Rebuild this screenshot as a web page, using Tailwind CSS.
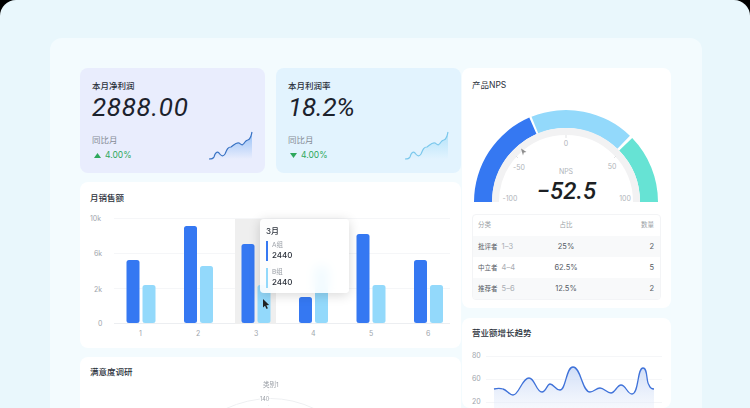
<!DOCTYPE html>
<html lang="en">
<head>
    <meta charset="UTF-8">
    <title>Dashboard</title>
    <script src="https://cdn.jsdelivr.net/npm/@tailwindcss/browser@4"></script>
</head>
<body class="bg-black">
<div class="w-[750px] h-[408px] overflow-hidden rounded-t-[16px] bg-[#e9f7fc] font-['Inter','Noto_Sans_CJK_SC',sans-serif] text-[#2a303a]">
    <div class="ml-[50px] mt-[38px] w-[652px] h-[400px] rounded-[12px] bg-[#f3fbfe] pl-[30px] pt-[30px] flex items-start">
        <!-- left column -->
        <div class="w-[381px] flex flex-col">
            <div class="flex gap-[11px]">
                <div class="relative w-[185px] h-[105px] rounded-[8px] bg-[#e9edfd] pl-[12px] pt-[12px]">
                    <div class="text-[8.500px] leading-[13px] font-medium">本月净利润</div>
                    <div class="mt-[-1px] text-[26px] leading-[30px] italic tracking-[0.7px] font-['Roboto'] text-[#1c222c]">2888.00</div>
                    <div class="text-[8.500px] leading-[12px] text-[#868c96] mt-[12px]">同比月</div>
                    <div class="flex items-center gap-[4px] text-[8.500px] leading-[12px] text-[#2ea85c] mt-[3px] ml-[2px]">
                        <svg width="7" height="5" viewBox="0 0 7 5"><path d="M3.500 0L7 5H0z" fill="#2ea85c"/></svg>4.00%
                    </div>
                    <svg class="absolute left-[128px] top-[62px]" width="46" height="32" viewBox="0 0 46 32">
                        <defs><linearGradient id="s1" x1="0" y1="0" x2="0" y2="1"><stop offset="0" stop-color="#7fb4f5" stop-opacity=".8"/><stop offset="1" stop-color="#7fb4f5" stop-opacity="0"/></linearGradient></defs>
                        <path d="M1 29C4 29 5 29 6 27C7 23 9 21 11 23C13 26 15 27 17 24C19 19 20 17 23 17C26 15 28 12 31 13C33 14 34 17 37 12C39 9 41 11 42 8C43 7 43 6 44 2V29H1z" fill="url(#s1)"/>
                        <path d="M1 29C4 29 5 29 6 27C7 23 9 21 11 23C13 26 15 27 17 24C19 19 20 17 23 17C26 15 28 12 31 13C33 14 34 17 37 12C39 9 41 11 42 8C43 7 43 6 44 2" fill="none" stroke="#3a73c4" stroke-width="1.200"/>
                    </svg>
                </div>
                <div class="relative w-[185px] h-[105px] rounded-[8px] bg-[#e2f3fe] pl-[12px] pt-[12px]">
                    <div class="text-[8.500px] leading-[13px] font-medium">本月利润率</div>
                    <div class="mt-[-1px] text-[26px] leading-[30px] italic tracking-[-0.2px] font-['Roboto'] text-[#1c222c]">18.2%</div>
                    <div class="text-[8.500px] leading-[12px] text-[#868c96] mt-[12px]">同比月</div>
                    <div class="flex items-center gap-[4px] text-[8.500px] leading-[12px] text-[#2ea85c] mt-[3px] ml-[2px]">
                        <svg width="7" height="5" viewBox="0 0 7 5"><path d="M3.500 5L7 0H0z" fill="#2ea85c"/></svg>4.00%
                    </div>
                    <svg class="absolute left-[128px] top-[62px]" width="46" height="32" viewBox="0 0 46 32">
                        <defs><linearGradient id="s2" x1="0" y1="0" x2="0" y2="1"><stop offset="0" stop-color="#a6def9" stop-opacity=".8"/><stop offset="1" stop-color="#a6def9" stop-opacity="0"/></linearGradient></defs>
                        <path d="M1 29C4 29 5 29 6 27C7 23 9 21 11 23C13 26 15 27 17 24C19 19 20 17 23 17C26 15 28 12 31 13C33 14 34 17 37 12C39 9 41 11 42 8C43 7 43 6 44 2V29H1z" fill="url(#s2)"/>
                        <path d="M1 29C4 29 5 29 6 27C7 23 9 21 11 23C13 26 15 27 17 24C19 19 20 17 23 17C26 15 28 12 31 13C33 14 34 17 37 12C39 9 41 11 42 8C43 7 43 6 44 2" fill="none" stroke="#7cc8ec" stroke-width="1.200"/>
                    </svg>
                </div>
            </div>

            <!-- monthly sales -->
            <div class="relative mt-[9px] h-[166px] rounded-[8px] bg-white">
                <div class="pl-[10px] pt-[10px] text-[8.500px] leading-[13px] font-medium">月销售额</div>
                <svg class="absolute left-0 top-0" width="381" height="166" viewBox="0 0 381 166">
                    <g stroke="#f5f6f8" stroke-width="1">
                        <path d="M34 36.500H370M34 71.500H370M34 106.500H370"/>
                        <path d="M34 141.500H370" stroke="#eceef1"/>
                    </g>
                    <rect x="155" y="37" width="41" height="105" fill="#efefef"/>
                    <g fill="#3578f2">
                        <rect x="46.500" y="78" width="13" height="63" rx="2.500"/>
                        <rect x="104" y="44" width="13" height="97" rx="2.500"/>
                        <rect x="161.500" y="62" width="13" height="79" rx="2.500"/>
                        <rect x="219" y="115" width="13" height="26" rx="2.500"/>
                        <rect x="276.500" y="52" width="13" height="89" rx="2.500"/>
                        <rect x="334" y="78" width="13" height="63" rx="2.500"/>
                    </g>
                    <g fill="#93d9fb">
                        <rect x="62.500" y="103" width="13" height="38" rx="2.500"/>
                        <rect x="120" y="84" width="13" height="57" rx="2.500"/>
                        <rect x="177.500" y="103" width="13" height="38" rx="2.500"/>
                        <rect x="235" y="84" width="13" height="57" rx="2.500"/>
                        <rect x="292.500" y="103" width="13" height="38" rx="2.500"/>
                        <rect x="350" y="103" width="13" height="38" rx="2.500"/>
                    </g>
                    <g fill="#a0a5ac" font-size="7" font-family="Inter">
                        <text x="10" y="39">10k</text><text x="14" y="74">6k</text><text x="14" y="110">2k</text><text x="18" y="144">0</text>
                        <text x="59" y="154">1</text><text x="116" y="154">2</text><text x="174" y="154">3</text><text x="231" y="154">4</text><text x="289" y="154">5</text><text x="346" y="154">6</text>
                    </g>
                </svg>
                <!-- tooltip -->
                <div class="absolute left-[180px] top-[37px] w-[89px] h-[74px] rounded-[4px] bg-white/85 backdrop-blur-[6px] shadow-[0_2px_12px_rgba(0,0,0,0.16)] pl-[6px] pt-[7px]">
                    <div class="text-[8px] leading-[11px] font-medium">3月</div>
                    <div class="mt-[4px] flex gap-[4px]">
                        <div class="w-[2px] h-[20px] bg-[#3578f2]"></div>
                        <div><div class="text-[6.500px] leading-[9px] text-[#9a9fa6]">A组</div><div class="text-[8px] leading-[11px] font-medium">2440</div></div>
                    </div>
                    <div class="mt-[7px] flex gap-[4px]">
                        <div class="w-[2px] h-[20px] bg-[#93d9fb]"></div>
                        <div><div class="text-[6.500px] leading-[9px] text-[#9a9fa6]">B组</div><div class="text-[8px] leading-[11px] font-medium">2440</div></div>
                    </div>
                </div>
                <svg class="absolute left-[182px] top-[116px]" width="9" height="12" viewBox="0 0 9 12"><path d="M1 1v8.500l2-1.800 1.500 3.200 1.400-.6-1.500-3.100 2.700-.2z" fill="#222"/></svg>
            </div>

            <!-- survey -->
            <div class="relative mt-[9px] h-[60px] rounded-[8px] bg-white overflow-hidden">
                <div class="pl-[10px] pt-[9px] text-[8.500px] leading-[13px] font-medium">满意度调研</div>
                <svg class="absolute left-0 top-0" width="381" height="60" viewBox="0 0 381 60">
                    <path d="M145 52Q191 31 235 52" fill="none" stroke="#eef0f2"/>
                    <path d="M188.500 30V60" stroke="#f0f1f3" stroke-dasharray="1 2"/>
                </svg>
                <div class="absolute left-[183px] top-[24px] text-[6.500px] leading-[9px] text-[#9a9fa6]">类别1</div>
                <div class="absolute left-[180px] top-[38px] text-[5.500px] leading-[8px] text-[#9a9fa6] bg-white">140</div>
            </div>
        </div>

        <!-- right column -->
        <div class="ml-px w-[209px] flex flex-col">
            <div class="relative h-[240px] rounded-[8px] bg-white">
                <div class="pl-[10px] pt-[11px] text-[8.500px] leading-[13px]">产品NPS</div>
                <svg class="absolute left-0 top-0" width="209" height="146" viewBox="0 0 209 146">
                    <path d="M12 134A92 92 0 0 1 67.300 49.600L74.500 66.100A74 74 0 0 0 30 134z" fill="#3578f2"/>
                    <path d="M69.500 48.700A92 92 0 0 1 167.900 67.800L155.400 80.800A74 74 0 0 0 76.300 65.400z" fill="#93d9fb"/>
                    <path d="M170.200 70.100A92 92 0 0 1 196 134H178A74 74 0 0 0 157.200 82.600z" fill="#66e3d4"/>
                    <path d="M33.500 134A70.500 70.500 0 0 1 174.500 134" fill="none" stroke="#f2f2f3" stroke-width="7"/>
                    <path d="M104 67v3M54 88l2 2M154 88l-2 2" stroke="#e2e3e5" stroke-width="1"/>
                    <path d="M59 80.500L64.500 84L61.800 84.500L61 87.500z" fill="#8d8d8d"/>
                    <g fill="#b0b4ba" font-size="7" font-family="Inter" text-anchor="middle">
                        <text x="104" y="77.500">0</text><text x="57" y="101.500">-50</text><text x="150" y="101">50</text>
                        <text x="104" y="105.500">NPS</text>
                        <text x="48" y="132.500">-100</text><text x="163" y="132.500">100</text>
                    </g>
                </svg>
                <div class="absolute left-0 top-[113px] w-[209px] text-center text-[24px] leading-[20px] font-medium italic font-['Roboto'] text-[#1c1f24]">−52.5</div>
                <!-- table -->
                <div class="absolute left-[10px] top-[146px] w-[189px] rounded-[4px] border border-[#f3f4f6] text-[7.500px] text-[#555b64] overflow-hidden">
                    <div class="h-[21px] flex items-center pl-[5px] pr-[6px] text-[6.500px] text-[#9a9fa6]"><span class="w-[60px]">分类</span><span class="w-[56px] text-center">占比</span><span class="flex-1 text-right">数量</span></div>
                    <div class="h-[21px] flex items-center pl-[5px] pr-[6px] bg-[#f8f9fa]"><span class="w-[60px]"><span class="text-[6.500px]">批评者</span> <span class="text-[#a9adb3] ml-[2px]">1–3</span></span><span class="w-[56px] text-center">25%</span><span class="flex-1 text-right">2</span></div>
                    <div class="h-[21px] flex items-center pl-[5px] pr-[6px]"><span class="w-[60px]"><span class="text-[6.500px]">中立者</span> <span class="text-[#a9adb3] ml-[2px]">4–4</span></span><span class="w-[56px] text-center">62.5%</span><span class="flex-1 text-right">5</span></div>
                    <div class="h-[21px] flex items-center pl-[5px] pr-[6px] bg-[#f8f9fa]"><span class="w-[60px]"><span class="text-[6.500px]">推荐者</span> <span class="text-[#a9adb3] ml-[2px]">5–6</span></span><span class="w-[56px] text-center">12.5%</span><span class="flex-1 text-right">2</span></div>
                </div>
            </div>

            <!-- revenue -->
            <div class="relative mt-[10px] h-[90px] rounded-[8px] bg-white overflow-hidden">
                <div class="pl-[10px] pt-[9px] text-[8.500px] leading-[13px] font-medium">营业额增长趋势</div>
                <svg class="absolute left-0 top-0" width="209" height="90" viewBox="0 0 209 90">
                    <defs><linearGradient id="g3" x1="0" y1="0" x2="0" y2="1"><stop offset="0" stop-color="#c4d5f5" stop-opacity=".8"/><stop offset="1" stop-color="#e6edfb" stop-opacity=".4"/></linearGradient></defs>
                    <path d="M24 38.500H200M24 61.500H200M24 84.500H200" stroke="#f5f6f8"/>
                    <path d="M32 71C36 70 38 70 41 71C45 72 47 77 51 77C57 77 60 60 67 60C73 60 74 74 80 74C84 74 85 66 88 66C92 66 93 72 98 72C104 72 104 49 111 49C119 49 120 74 128 74C132 74 134 70 138 70C142 70 145 75 149 75C153 75 155 67 159 67C164 67 165 76 170 76C177 76 175 50 181 50C186 50 184 64 187 67C188 70 190 71 192 71V90H32z" fill="url(#g3)"/>
                    <path d="M32 71C36 70 38 70 41 71C45 72 47 77 51 77C57 77 60 60 67 60C73 60 74 74 80 74C84 74 85 66 88 66C92 66 93 72 98 72C104 72 104 49 111 49C119 49 120 74 128 74C132 74 134 70 138 70C142 70 145 75 149 75C153 75 155 67 159 67C164 67 165 76 170 76C177 76 175 50 181 50C186 50 184 64 187 67C188 70 190 71 192 71" fill="none" stroke="#3f72d9" stroke-width="1.300"/>
                    <g fill="#a0a5ac" font-size="7" font-family="Inter">
                        <text x="10" y="39.500">80</text><text x="10" y="62.500">60</text><text x="10" y="85.500">20</text>
                    </g>
                </svg>
            </div>
        </div>
    </div>
</div>
</body>
</html>
